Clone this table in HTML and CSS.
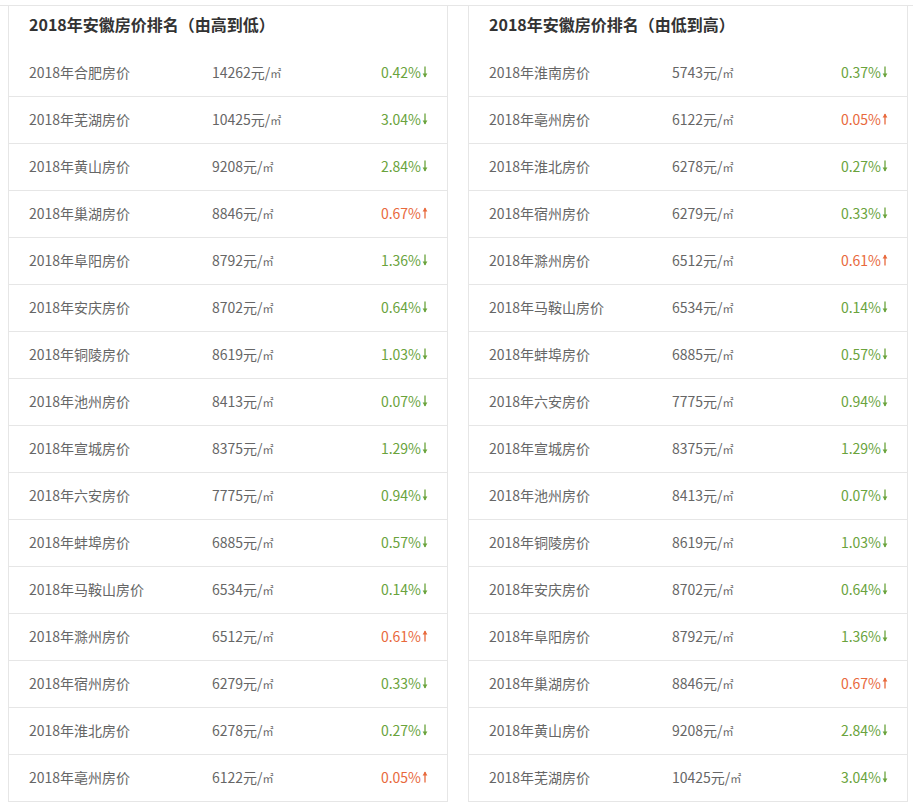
FILE: index.html
```html
<!DOCTYPE html>
<html lang="zh-CN">
<head>
<meta charset="utf-8">
<title>2018年安徽房价排名</title>
<link rel="stylesheet" href="styles.css">
</head>
<body>
<svg width="0" height="0" class="defs" aria-hidden="true">
  <defs>
    <symbol id="ad" viewBox="0 0 6 12"><path d="M3 0.5V11" stroke="currentColor" stroke-width="1.3" fill="none"/><path d="M0.6 7.6L3 11.6L5.4 7.6Z" fill="currentColor"/></symbol>
    <symbol id="au" viewBox="0 0 6 12"><path d="M3 1V11.5" stroke="currentColor" stroke-width="1.3" fill="none"/><path d="M0.6 4.4L3 0.4L5.4 4.4Z" fill="currentColor"/></symbol>
  </defs>
</svg>
<div class="wrap">
  <div class="panel">
    <div class="head">2018年安徽房价排名（由高到低）</div>
    <div class="row"><span class="name">2018年合肥房价</span><span class="val">14262元/<small>㎡</small></span><span class="pct down">0.42%<svg class="arr"><use href="#ad"/></svg></span></div>
    <div class="row"><span class="name">2018年芜湖房价</span><span class="val">10425元/<small>㎡</small></span><span class="pct down">3.04%<svg class="arr"><use href="#ad"/></svg></span></div>
    <div class="row"><span class="name">2018年黄山房价</span><span class="val">9208元/<small>㎡</small></span><span class="pct down">2.84%<svg class="arr"><use href="#ad"/></svg></span></div>
    <div class="row"><span class="name">2018年巢湖房价</span><span class="val">8846元/<small>㎡</small></span><span class="pct up">0.67%<svg class="arr"><use href="#au"/></svg></span></div>
    <div class="row"><span class="name">2018年阜阳房价</span><span class="val">8792元/<small>㎡</small></span><span class="pct down">1.36%<svg class="arr"><use href="#ad"/></svg></span></div>
    <div class="row"><span class="name">2018年安庆房价</span><span class="val">8702元/<small>㎡</small></span><span class="pct down">0.64%<svg class="arr"><use href="#ad"/></svg></span></div>
    <div class="row"><span class="name">2018年铜陵房价</span><span class="val">8619元/<small>㎡</small></span><span class="pct down">1.03%<svg class="arr"><use href="#ad"/></svg></span></div>
    <div class="row"><span class="name">2018年池州房价</span><span class="val">8413元/<small>㎡</small></span><span class="pct down">0.07%<svg class="arr"><use href="#ad"/></svg></span></div>
    <div class="row"><span class="name">2018年宣城房价</span><span class="val">8375元/<small>㎡</small></span><span class="pct down">1.29%<svg class="arr"><use href="#ad"/></svg></span></div>
    <div class="row"><span class="name">2018年六安房价</span><span class="val">7775元/<small>㎡</small></span><span class="pct down">0.94%<svg class="arr"><use href="#ad"/></svg></span></div>
    <div class="row"><span class="name">2018年蚌埠房价</span><span class="val">6885元/<small>㎡</small></span><span class="pct down">0.57%<svg class="arr"><use href="#ad"/></svg></span></div>
    <div class="row"><span class="name">2018年马鞍山房价</span><span class="val">6534元/<small>㎡</small></span><span class="pct down">0.14%<svg class="arr"><use href="#ad"/></svg></span></div>
    <div class="row"><span class="name">2018年滁州房价</span><span class="val">6512元/<small>㎡</small></span><span class="pct up">0.61%<svg class="arr"><use href="#au"/></svg></span></div>
    <div class="row"><span class="name">2018年宿州房价</span><span class="val">6279元/<small>㎡</small></span><span class="pct down">0.33%<svg class="arr"><use href="#ad"/></svg></span></div>
    <div class="row"><span class="name">2018年淮北房价</span><span class="val">6278元/<small>㎡</small></span><span class="pct down">0.27%<svg class="arr"><use href="#ad"/></svg></span></div>
    <div class="row"><span class="name">2018年亳州房价</span><span class="val">6122元/<small>㎡</small></span><span class="pct up">0.05%<svg class="arr"><use href="#au"/></svg></span></div>
  </div>
  <div class="panel">
    <div class="head">2018年安徽房价排名（由低到高）</div>
    <div class="row"><span class="name">2018年淮南房价</span><span class="val">5743元/<small>㎡</small></span><span class="pct down">0.37%<svg class="arr"><use href="#ad"/></svg></span></div>
    <div class="row"><span class="name">2018年亳州房价</span><span class="val">6122元/<small>㎡</small></span><span class="pct up">0.05%<svg class="arr"><use href="#au"/></svg></span></div>
    <div class="row"><span class="name">2018年淮北房价</span><span class="val">6278元/<small>㎡</small></span><span class="pct down">0.27%<svg class="arr"><use href="#ad"/></svg></span></div>
    <div class="row"><span class="name">2018年宿州房价</span><span class="val">6279元/<small>㎡</small></span><span class="pct down">0.33%<svg class="arr"><use href="#ad"/></svg></span></div>
    <div class="row"><span class="name">2018年滁州房价</span><span class="val">6512元/<small>㎡</small></span><span class="pct up">0.61%<svg class="arr"><use href="#au"/></svg></span></div>
    <div class="row"><span class="name">2018年马鞍山房价</span><span class="val">6534元/<small>㎡</small></span><span class="pct down">0.14%<svg class="arr"><use href="#ad"/></svg></span></div>
    <div class="row"><span class="name">2018年蚌埠房价</span><span class="val">6885元/<small>㎡</small></span><span class="pct down">0.57%<svg class="arr"><use href="#ad"/></svg></span></div>
    <div class="row"><span class="name">2018年六安房价</span><span class="val">7775元/<small>㎡</small></span><span class="pct down">0.94%<svg class="arr"><use href="#ad"/></svg></span></div>
    <div class="row"><span class="name">2018年宣城房价</span><span class="val">8375元/<small>㎡</small></span><span class="pct down">1.29%<svg class="arr"><use href="#ad"/></svg></span></div>
    <div class="row"><span class="name">2018年池州房价</span><span class="val">8413元/<small>㎡</small></span><span class="pct down">0.07%<svg class="arr"><use href="#ad"/></svg></span></div>
    <div class="row"><span class="name">2018年铜陵房价</span><span class="val">8619元/<small>㎡</small></span><span class="pct down">1.03%<svg class="arr"><use href="#ad"/></svg></span></div>
    <div class="row"><span class="name">2018年安庆房价</span><span class="val">8702元/<small>㎡</small></span><span class="pct down">0.64%<svg class="arr"><use href="#ad"/></svg></span></div>
    <div class="row"><span class="name">2018年阜阳房价</span><span class="val">8792元/<small>㎡</small></span><span class="pct down">1.36%<svg class="arr"><use href="#ad"/></svg></span></div>
    <div class="row"><span class="name">2018年巢湖房价</span><span class="val">8846元/<small>㎡</small></span><span class="pct up">0.67%<svg class="arr"><use href="#au"/></svg></span></div>
    <div class="row"><span class="name">2018年黄山房价</span><span class="val">9208元/<small>㎡</small></span><span class="pct down">2.84%<svg class="arr"><use href="#ad"/></svg></span></div>
    <div class="row"><span class="name">2018年芜湖房价</span><span class="val">10425元/<small>㎡</small></span><span class="pct down">3.04%<svg class="arr"><use href="#ad"/></svg></span></div>
  </div>
</div>
</body>
</html>
```
FILE: styles.css
```css
html, body {
  margin: 0;
  padding: 0;
  background: #fff;
}
body {
  font-family: "Noto Sans CJK SC", "Noto Sans", sans-serif;
  color: #666;
  overflow: hidden;
}
.defs {
  position: absolute;
  width: 0;
  height: 0;
}
.wrap {
  margin-top: 5px;
  border-top: 1px solid #e6e6e6;
  display: flex;
  gap: 20px;
  padding-left: 8px;
}
.panel {
  width: 438px;
  border-left: 1px solid #e6e6e6;
  border-right: 1px solid #e6e6e6;
}
.head {
  height: 44px;
  box-sizing: border-box;
  padding: 6px 20px 0;
  font-size: 16px;
  line-height: 24px;
  font-weight: bold;
  color: #333;
}
.row {
  height: 46px;
  box-sizing: border-box;
  border-bottom: 1px solid #e6e6e6;
  height: 47px;
  display: flex;
  align-items: center;
  padding: 0 19px 2px 20px;
  font-size: 14px;
}
.name {
  width: 183px;
  color: #666;
}
.val {
  color: #666;
}
.val small {
  font-size: 11px;
}
.pct {
  margin-left: auto;
  display: flex;
  align-items: center;
}
.arr {
  width: 6px;
  height: 12px;
  margin-left: 1px;
}
.down {
  color: #6aa33c;
}
.up {
  color: #e8693c;
}
```
